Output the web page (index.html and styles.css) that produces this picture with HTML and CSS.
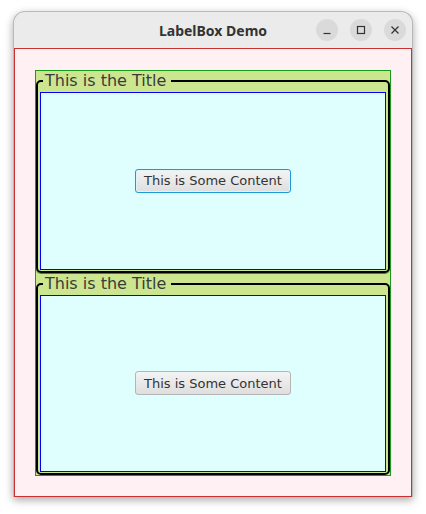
FILE: index.html
```html
<!DOCTYPE html>
<html>
<head>
<meta charset="utf-8">
<link rel="stylesheet" href="styles.css">
</head>
<body>
<div class="window">
  <div class="titlebar">
    <div class="title">LabelBox Demo</div>
    <div class="controls">
      <span class="ctl"><svg width="10" height="10" viewBox="0 0 10 10"><line x1="1.5" y1="8.5" x2="8.5" y2="8.5" stroke="#333" stroke-width="1.2"/></svg></span>
      <span class="ctl"><svg width="10" height="10" viewBox="0 0 10 10"><rect x="1.5" y="1.5" width="7" height="7" fill="none" stroke="#333" stroke-width="1.2"/></svg></span>
      <span class="ctl"><svg width="10" height="10" viewBox="0 0 10 10"><path d="M1.5 1.5 L8.5 8.5 M8.5 1.5 L1.5 8.5" stroke="#333" stroke-width="1.2"/></svg></span>
    </div>
  </div>
  <div class="content">
    <div class="stack">
      <fieldset class="labelbox first">
        <legend class="boxtitle">This is the Title</legend>
        <div class="inner">
          <button class="btn focused">This is Some Content</button>
        </div>
      </fieldset>
      <fieldset class="labelbox">
        <legend class="boxtitle">This is the Title</legend>
        <div class="inner">
          <button class="btn">This is Some Content</button>
        </div>
      </fieldset>
    </div>
  </div>
</div>
</body>
</html>
```
FILE: styles.css
```css
html, body {
  margin: 0;
  padding: 0;
  background: #ffffff;
}
body {
  width: 426px;
  height: 514px;
  overflow: hidden;
}
.window {
  margin: 11px 0 0 13px;
  width: 398px;
  border: 1px solid #b9b9b9;
  border-bottom: none;
  border-radius: 12px 12px 0 0;
  background: #ebebeb;
  box-shadow: 0 3px 8px rgba(0,0,0,0.35);
}
.titlebar {
  height: 36px;
  display: flex;
  align-items: center;
  justify-content: center;
  position: relative;
  border-radius: 12px 12px 0 0;
}
.title {
  font-family: "Noto Sans", "DejaVu Sans", sans-serif;
  font-weight: bold;
  font-size: 14px;
  color: #333333;
}
.controls {
  position: absolute;
  right: 6px;
  top: 7px;
  display: flex;
  gap: 12px;
}
.ctl {
  width: 22px;
  height: 22px;
  border-radius: 50%;
  background: #dadada;
  display: flex;
  align-items: center;
  justify-content: center;
}
.content {
  background: #fff0f3;
  border: 1px solid #c8312f;
  padding: 21px 20px 20px 20px;
}
.stack {
  height: 404px;
  border: 1px solid #1a9a1a;
  background: #cce690;
  display: flex;
  flex-direction: column;
}
.labelbox {
  flex: 1;
  margin: 0;
  min-width: 0;
  border: 2px solid #000000;
  border-radius: 5px;
  padding: 1px 2px 1px 2px;
  display: flex;
  flex-direction: column;
}
.labelbox.first {
  box-shadow: 0 1px 0 #1a9a1a;
  margin-bottom: 1px;
}
.boxtitle {
  font-family: "DejaVu Sans", "Noto Sans", sans-serif;
  font-size: 16px;
  line-height: 20px;
  color: #3b3b3b;
  padding: 0 5px 0 2px;
  margin-left: 3px;
}
.inner {
  flex: 1;
  border: 1px solid #0000ff;
  background: #dfffff;
  display: flex;
  align-items: center;
  justify-content: center;
}
.btn {
  font-family: "DejaVu Sans", "Noto Sans", sans-serif;
  font-size: 13px;
  color: #333333;
  height: 24px;
  width: 156px;
  padding: 0;
  border: 1px solid #b5b5b5;
  border-radius: 3px;
  background: linear-gradient(#f4f4f4, #dedede);
}
.btn.focused {
  border-color: #1d9bd8;
  box-shadow: inset 0 0 0 1px #dff3fb;
}
```
